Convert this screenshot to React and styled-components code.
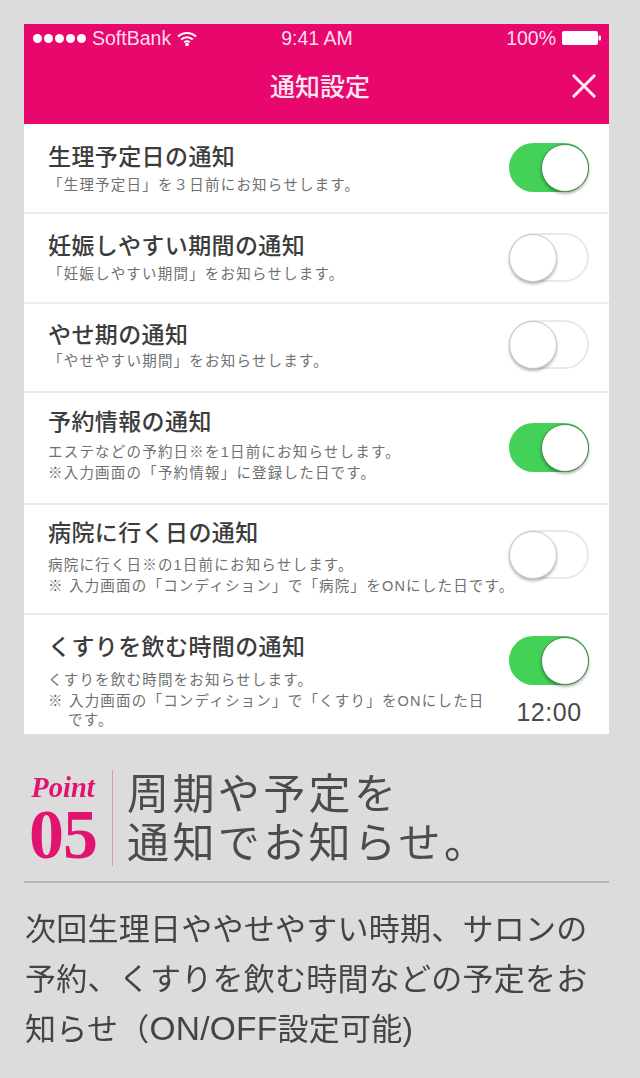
import React from 'react';
import styled, { createGlobalStyle } from 'styled-components';

const pink = '#e8076c';
const jpFont = '"Liberation Sans", "Noto Sans CJK JP", "Noto Sans", sans-serif';

const GlobalStyle = createGlobalStyle`
  html, body {
    margin: 0;
    padding: 0;
    background: #dcdcdc;
  }
`;

const Page = styled.div`
  width: 640px;
  height: 1078px;
  padding: 24px 31px 0 24px;
  box-sizing: border-box;
  overflow: hidden;
  font-family: ${jpFont};
  filter: blur(0.7px);
`;

const Phone = styled.div`
  width: 585px;
  height: 710px;
  background: #fff;
  overflow: hidden;
`;

const Header = styled.div`
  height: 100px;
  background: ${pink};
  color: #fff;
`;

const StatusBar = styled.div`
  display: grid;
  grid-template-columns: 1fr auto 1fr;
  align-items: center;
  height: 28px;
  padding: 0 8px 0 9px;
  font-size: 19.5px;
  color: #fbdcea;
`;

const Carrier = styled.div`
  display: flex;
  align-items: center;
  gap: 6px;
`;

const Dots = styled.div`
  display: flex;
  gap: 2px;
`;

const Dot = styled.span`
  width: 9px;
  height: 9px;
  border-radius: 50%;
  background: #fff;
`;

const BatteryWrap = styled.div`
  display: flex;
  align-items: center;
  justify-content: flex-end;
  gap: 6px;
`;

const NavBar = styled.div`
  display: grid;
  grid-template-columns: 48px 1fr 48px;
  align-items: center;
  height: 70px;
`;

const NavTitle = styled.div`
  grid-column: 2;
  padding-left: 7px;
  text-align: center;
  font-size: 25px;
  font-weight: 500;
  line-height: 68px;
  color: #fde6f0;
`;

const CloseButton = styled.div`
  display: flex;
  padding: 0 0 3px 11px;
`;

const Row = styled.div`
  display: flex;
  justify-content: space-between;
  height: ${(p) => p.$height}px;
  box-sizing: border-box;
  padding: ${(p) => p.$pad}px 20px 0 24px;
  border-bottom: ${(p) => (p.$last ? 'none' : '2px solid #ececec')};
`;

const RowText = styled.div`
  min-width: 0;
`;

const Title = styled.div`
  font-size: 23px;
  font-weight: 500;
  letter-spacing: 0.4px;
  line-height: 32px;
  color: #3c3c3c;
  white-space: nowrap;
`;

const Sub = styled.div`
  margin-top: ${(p) => p.$gap}px;
  font-size: 14.5px;
  letter-spacing: 1.2px;
  line-height: 21px;
  color: #6f6f6f;
  white-space: nowrap;
`;

const SubLine = styled.div`
  padding-left: ${(p) => (p.$hang ? 20 : 0)}px;
  margin-top: ${(p) => (p.$hang ? -2 : 0)}px;
`;

const RowSide = styled.div`
  display: flex;
  flex-direction: column;
  align-items: center;
  flex-shrink: 0;
  width: 80px;
  margin-top: ${(p) => p.$top}px;
`;

const Track = styled.div`
  display: flex;
  justify-content: ${(p) => (p.$on ? 'flex-end' : 'flex-start')};
  width: 80px;
  height: 49px;
  box-sizing: border-box;
  border-radius: 25px;
  background: ${(p) => (p.$on ? '#43d158' : '#fff')};
  border: ${(p) => (p.$on ? 'none' : '2px solid #e9e9e9')};
`;

const Knob = styled.div`
  width: 48px;
  height: 48px;
  margin: ${(p) => (p.$on ? '0.5px' : '-1px 0 0 -2px')};
  box-sizing: border-box;
  border-radius: 50%;
  background: #fff;
  border: 1px solid ${(p) => (p.$on ? '#3f8f4e' : '#c9c9c9')};
  box-shadow: 0 2px 3px rgba(0, 0, 0, 0.3);
`;

const TimeLabel = styled.div`
  margin-top: 10px;
  font-size: 25px;
  letter-spacing: 0.5px;
  line-height: 34px;
  color: #4a4a4a;
`;

const PointBlock = styled.div`
  display: flex;
  align-items: stretch;
  height: 96px;
  margin-top: 36px;
  padding-left: 5px;
`;

const PointBadge = styled.div`
  display: flex;
  flex-direction: column;
  align-items: center;
  width: 68px;
  padding-top: 1px;
  color: #e2126f;
  font-family: "Liberation Serif", serif;
`;

const PointWord = styled.div`
  font-size: 28.5px;
  font-weight: 700;
  font-style: italic;
  line-height: 34px;
`;

const PointNumber = styled.div`
  font-size: 70px;
  font-weight: 700;
  line-height: 60px;
  letter-spacing: -1px;
`;

const PointDivider = styled.div`
  width: 1px;
  margin: 0 14px 0 15px;
  background: #d39ab6;
`;

const Headline = styled.div`
  font-size: 42px;
  letter-spacing: 3.4px;
  line-height: 49px;
  color: #4c4c4c;
  white-space: nowrap;
`;

const Rule = styled.div`
  height: 2px;
  margin-top: 15px;
  background: #b6b6b6;
`;

const Body = styled.div`
  margin-top: 22px;
  padding-left: 1px;
  font-size: 31px;
  letter-spacing: 0.25px;
  line-height: 49.5px;
  color: #444;
  white-space: nowrap;
`;

const Latin = styled.span`
  font-size: 33.5px;
`;

const rows = [
  { title: '生理予定日の通知', sub: ['「生理予定日」を３日前にお知らせします。'], on: true, height: 90, pad: 17, top: 2, gap: 2 },
  { title: '妊娠しやすい期間の通知', sub: ['「妊娠しやすい期間」をお知らせします。'], on: false, height: 90, pad: 16, top: 3, gap: 2 },
  { title: 'やせ期の通知', sub: ['「やせやすい期間」をお知らせします。'], on: false, height: 89, pad: 15, top: 1, gap: 0 },
  { title: '予約情報の通知', sub: ['エステなどの予約日※を1日前にお知らせします。', '※入力画面の「予約情報」に登録した日です。'], on: true, height: 112, pad: 13, top: 17, gap: 4 },
  { title: '病院に行く日の通知', sub: ['病院に行く日※の1日前にお知らせします。', '※ 入力画面の「コンディション」で「病院」をONにした日です。'], on: false, height: 110, pad: 12, top: 13, gap: 6 },
  { title: 'くすりを飲む時間の通知', sub: ['くすりを飲む時間をお知らせします。', '※ 入力画面の「コンディション」で「くすり」をONにした日', 'です。'], on: true, height: 119, pad: 16, top: 5, gap: 7, time: '12:00', last: true },
];

function Wifi() {
  return (
    <svg width="20" height="15" viewBox="0 0 20 15" fill="none" stroke="#fff" strokeWidth="2">
      <path d="M1 5.5a13 13 0 0 1 18 0" />
      <path d="M4.2 8.6a8.5 8.5 0 0 1 11.6 0" />
      <path d="M7.2 11.4a4 4 0 0 1 5.6 0" />
      <circle cx="10" cy="13.4" r="0.8" fill="#fff" />
    </svg>
  );
}

function Battery() {
  return (
    <svg width="39" height="14" viewBox="0 0 39 14" fill="#fff">
      <rect x="0" y="0" width="36" height="14" rx="2" />
      <rect x="36.5" y="4.5" width="2.5" height="5" rx="1" />
    </svg>
  );
}

function CloseIcon() {
  return (
    <svg width="24" height="24" viewBox="0 0 24 24" stroke="#fdeef5" strokeWidth="3" strokeLinecap="square">
      <path d="M2 2l20 20M22 2L2 22" />
    </svg>
  );
}

function Toggle({ on }) {
  return (
    <Track $on={on}>
      <Knob $on={on} />
    </Track>
  );
}

export default function App() {
  return (
    <Page>
      <GlobalStyle />
      <Phone>
        <Header>
          <StatusBar>
            <Carrier>
              <Dots>
                {[0, 1, 2, 3, 4].map((i) => <Dot key={i} />)}
              </Dots>
              SoftBank
              <Wifi />
            </Carrier>
            <div>9:41 AM</div>
            <BatteryWrap>
              100%
              <Battery />
            </BatteryWrap>
          </StatusBar>
          <NavBar>
            <NavTitle>通知設定</NavTitle>
            <CloseButton>
              <CloseIcon />
            </CloseButton>
          </NavBar>
        </Header>
        {rows.map((row) => (
          <Row key={row.title} $height={row.height} $pad={row.pad} $last={row.last}>
            <RowText>
              <Title>{row.title}</Title>
              <Sub $gap={row.gap}>
                {row.sub.map((line, i) => (
                  <SubLine key={line} $hang={i === 2}>{line}</SubLine>
                ))}
              </Sub>
            </RowText>
            <RowSide $top={row.top}>
              <Toggle on={row.on} />
              {row.time && <TimeLabel>{row.time}</TimeLabel>}
            </RowSide>
          </Row>
        ))}
      </Phone>
      <PointBlock>
        <PointBadge>
          <PointWord>Point</PointWord>
          <PointNumber>05</PointNumber>
        </PointBadge>
        <PointDivider />
        <Headline>
          周期や予定を
          <br />
          通知でお知らせ。
        </Headline>
      </PointBlock>
      <Rule />
      <Body>
        次回生理日ややせやすい時期、サロンの
        <br />
        予約、くすりを飲む時間などの予定をお
        <br />
        知らせ（<Latin>ON/OFF</Latin>設定可能)
      </Body>
    </Page>
  );
}
